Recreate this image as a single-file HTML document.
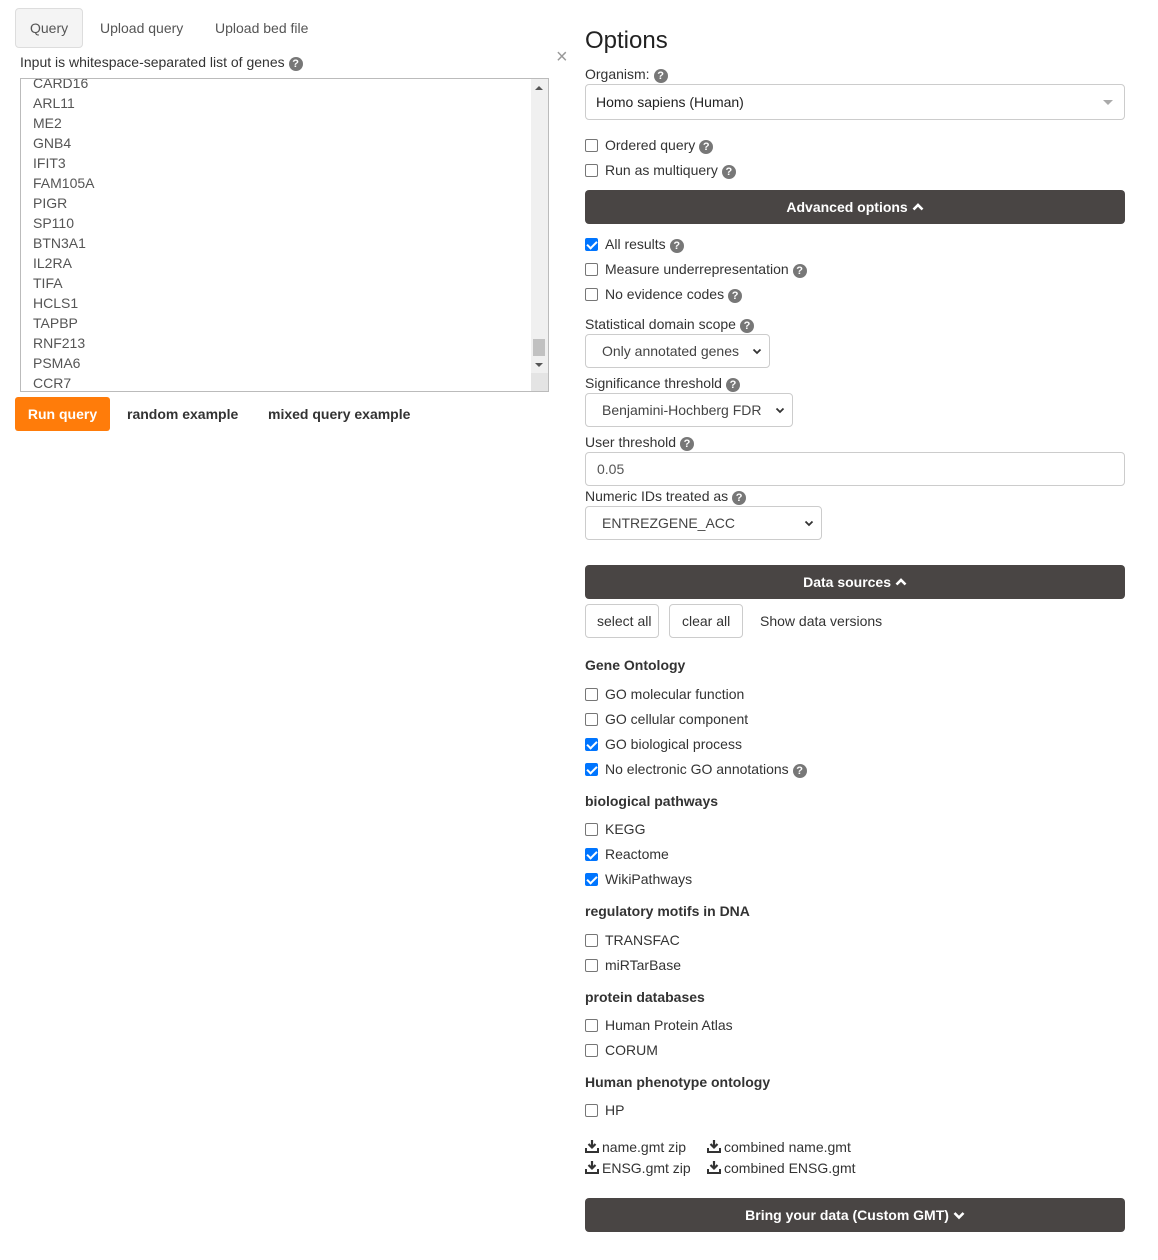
<!DOCTYPE html>
<html><head><meta charset="utf-8"><style>
*{box-sizing:border-box;margin:0;padding:0}
body{width:1158px;height:1260px;background:#fff;position:relative;font-family:"Liberation Sans",Arial,sans-serif;font-size:14px;color:#333;overflow:hidden}
.a{position:absolute;line-height:20px;white-space:nowrap}
.b{font-weight:bold}
.h{display:inline-block;width:14px;height:14px;border-radius:50%;background:#777;color:#fff;font-size:11px;font-weight:bold;line-height:14px;text-align:center;vertical-align:0px;margin-left:4px}
.cb{position:absolute;width:13px;height:13px;border:1px solid #767676;border-radius:2px;background:#fff}
.cb.on{background:#0075ff;border-color:#0075ff}
.cb.on:after{content:"";position:absolute;left:3px;top:0px;width:4px;height:8px;border:solid #fff;border-width:0 2px 2px 0;transform:rotate(45deg)}
.box{position:absolute;border:1px solid #ccc;border-radius:4px;background:#fff}
.bar{position:absolute;left:585px;width:540px;height:34px;background:#494544;border-radius:4px;color:#fff;font-weight:bold;text-align:center;line-height:34px}
.sel{position:absolute;border:1px solid #ccc;border-radius:4px;background:#fff;padding-left:16px;line-height:32px;color:#444}
.sel svg{position:absolute;right:7px;top:13px}
.gene{position:absolute;left:12px;line-height:20px;color:#555}
</style></head><body>

<div style="position:absolute;left:15px;top:8px;width:68px;height:40px;background:#f4f4f4;border:1px solid #ddd;border-radius:4px"></div>
<div class="a" style="left:30px;top:18px;color:#555">Query</div>
<div class="a" style="left:100px;top:18px;color:#555">Upload query</div>
<div class="a" style="left:215px;top:18px;color:#555">Upload bed file</div>
<div class="a" style="left:20px;top:52px">Input is whitespace-separated list of genes<span class="h">?</span></div>
<div class="a" style="left:556px;top:47px;color:#999;font-size:20px">×</div>

<div style="position:absolute;left:20px;top:78px;width:529px;height:314px;border:1px solid #bbb;overflow:hidden;background:#fff">
<div class="gene" style="top:-6px">CARD16</div>
<div class="gene" style="top:14px">ARL11</div>
<div class="gene" style="top:34px">ME2</div>
<div class="gene" style="top:54px">GNB4</div>
<div class="gene" style="top:74px">IFIT3</div>
<div class="gene" style="top:94px">FAM105A</div>
<div class="gene" style="top:114px">PIGR</div>
<div class="gene" style="top:134px">SP110</div>
<div class="gene" style="top:154px">BTN3A1</div>
<div class="gene" style="top:174px">IL2RA</div>
<div class="gene" style="top:194px">TIFA</div>
<div class="gene" style="top:214px">HCLS1</div>
<div class="gene" style="top:234px">TAPBP</div>
<div class="gene" style="top:254px">RNF213</div>
<div class="gene" style="top:274px">PSMA6</div>
<div class="gene" style="top:294px">CCR7</div>
<div style="position:absolute;left:510px;top:0;width:18px;height:312px;background:#f0f0f0"></div>
<div style="position:absolute;left:514px;top:7px;border:4px solid transparent;border-bottom:4px solid #555;border-top:0;width:0"></div>
<div style="position:absolute;left:512px;top:260px;width:12px;height:17px;background:#c1c1c1"></div>
<div style="position:absolute;left:514px;top:284px;border:4px solid transparent;border-top:4px solid #555;border-bottom:0;width:0"></div>
<div style="position:absolute;left:510px;top:294px;width:18px;height:18px;background:#e4e4e4"></div>
</div>

<div style="position:absolute;left:15px;top:397px;width:95px;height:34px;background:#ff7c0a;border-radius:3px;color:#fff;font-weight:bold;text-align:center;line-height:34px">Run query</div>
<div class="a b" style="left:127px;top:404px">random example</div>
<div class="a b" style="left:268px;top:404px">mixed query example</div>

<div class="a" style="left:585px;top:26px;font-size:24px;line-height:30px;color:#222">Options</div>
<div class="a" style="left:585px;top:64px">Organism:<span class="h">?</span></div>
<div class="box" style="left:585px;top:84px;width:540px;height:36px"></div>
<div class="a" style="left:596px;top:92px;color:#222">Homo sapiens (Human)</div>
<div style="position:absolute;left:1103px;top:100px;border:5px solid transparent;border-top:5px solid #aaa;border-bottom:0"></div>

<div class="cb" style="left:585px;top:139px"></div><div class="a" style="left:605px;top:135px">Ordered query<span class="h">?</span></div>
<div class="cb" style="left:585px;top:164px"></div><div class="a" style="left:605px;top:160px">Run as multiquery<span class="h">?</span></div>

<div class="bar" style="top:190px">Advanced options <svg width="12" height="10" viewBox="0 0 12 10" style="vertical-align:0"><path d="M1.5 7.5 L6 3 L10.5 7.5" stroke="#fff" stroke-width="2.6" fill="none"/></svg></div>

<div class="cb on" style="left:585px;top:238px"></div><div class="a" style="left:605px;top:234px">All results<span class="h">?</span></div>
<div class="cb" style="left:585px;top:263px"></div><div class="a" style="left:605px;top:259px">Measure underrepresentation<span class="h">?</span></div>
<div class="cb" style="left:585px;top:288px"></div><div class="a" style="left:605px;top:284px">No evidence codes<span class="h">?</span></div>

<div class="a" style="left:585px;top:314px">Statistical domain scope<span class="h">?</span></div>
<div class="sel" style="left:585px;top:334px;width:185px;height:34px">Only annotated genes<svg width="10" height="7"><path d="M1.5 1.5 L5 5 L8.5 1.5" stroke="#333" stroke-width="1.8" fill="none"/></svg></div>
<div class="a" style="left:585px;top:373px">Significance threshold<span class="h">?</span></div>
<div class="sel" style="left:585px;top:393px;width:208px;height:34px">Benjamini-Hochberg FDR<svg width="10" height="7"><path d="M1.5 1.5 L5 5 L8.5 1.5" stroke="#333" stroke-width="1.8" fill="none"/></svg></div>
<div class="a" style="left:585px;top:432px">User threshold<span class="h">?</span></div>
<div class="box" style="left:585px;top:452px;width:540px;height:34px"></div>
<div class="a" style="left:597px;top:459px;color:#555">0.05</div>
<div class="a" style="left:585px;top:486px">Numeric IDs treated as<span class="h">?</span></div>
<div class="sel" style="left:585px;top:506px;width:237px;height:34px">ENTREZGENE_ACC<svg width="10" height="7"><path d="M1.5 1.5 L5 5 L8.5 1.5" stroke="#333" stroke-width="1.8" fill="none"/></svg></div>

<div class="bar" style="top:565px">Data sources <svg width="12" height="10" viewBox="0 0 12 10"><path d="M1.5 7.5 L6 3 L10.5 7.5" stroke="#fff" stroke-width="2.6" fill="none"/></svg></div>
<div class="box" style="left:585px;top:604px;width:74px;height:34px"></div><div class="a" style="left:597px;top:611px">select all</div>
<div class="box" style="left:669px;top:604px;width:74px;height:34px"></div><div class="a" style="left:682px;top:611px">clear all</div>
<div class="a" style="left:760px;top:611px">Show data versions</div>

<div class="a b" style="left:585px;top:655px">Gene Ontology</div>
<div class="cb" style="left:585px;top:688px"></div><div class="a" style="left:605px;top:684px">GO molecular function</div>
<div class="cb" style="left:585px;top:713px"></div><div class="a" style="left:605px;top:709px">GO cellular component</div>
<div class="cb on" style="left:585px;top:738px"></div><div class="a" style="left:605px;top:734px">GO biological process</div>
<div class="cb on" style="left:585px;top:763px"></div><div class="a" style="left:605px;top:759px">No electronic GO annotations<span class="h">?</span></div>

<div class="a b" style="left:585px;top:791px">biological pathways</div>
<div class="cb" style="left:585px;top:823px"></div><div class="a" style="left:605px;top:819px">KEGG</div>
<div class="cb on" style="left:585px;top:848px"></div><div class="a" style="left:605px;top:844px">Reactome</div>
<div class="cb on" style="left:585px;top:873px"></div><div class="a" style="left:605px;top:869px">WikiPathways</div>

<div class="a b" style="left:585px;top:901px">regulatory motifs in DNA</div>
<div class="cb" style="left:585px;top:934px"></div><div class="a" style="left:605px;top:930px">TRANSFAC</div>
<div class="cb" style="left:585px;top:959px"></div><div class="a" style="left:605px;top:955px">miRTarBase</div>

<div class="a b" style="left:585px;top:987px">protein databases</div>
<div class="cb" style="left:585px;top:1019px"></div><div class="a" style="left:605px;top:1015px">Human Protein Atlas</div>
<div class="cb" style="left:585px;top:1044px"></div><div class="a" style="left:605px;top:1040px">CORUM</div>

<div class="a b" style="left:585px;top:1072px">Human phenotype ontology</div>
<div class="cb" style="left:585px;top:1104px"></div><div class="a" style="left:605px;top:1100px">HP</div>

<svg style="position:absolute;left:585px;top:1139px" width="14" height="14" viewBox="0 0 14 14"><path d="M7 1 V8 M3.5 5 L7 8.5 L10.5 5" stroke="#333" stroke-width="2.2" fill="none"/><path d="M1 9 V13 H13 V9" stroke="#333" stroke-width="2" fill="none"/></svg>
<div class="a" style="left:602px;top:1137px">name.gmt zip</div>
<svg style="position:absolute;left:707px;top:1139px" width="14" height="14" viewBox="0 0 14 14"><path d="M7 1 V8 M3.5 5 L7 8.5 L10.5 5" stroke="#333" stroke-width="2.2" fill="none"/><path d="M1 9 V13 H13 V9" stroke="#333" stroke-width="2" fill="none"/></svg>
<div class="a" style="left:724px;top:1137px">combined name.gmt</div>
<svg style="position:absolute;left:585px;top:1160px" width="14" height="14" viewBox="0 0 14 14"><path d="M7 1 V8 M3.5 5 L7 8.5 L10.5 5" stroke="#333" stroke-width="2.2" fill="none"/><path d="M1 9 V13 H13 V9" stroke="#333" stroke-width="2" fill="none"/></svg>
<div class="a" style="left:602px;top:1158px">ENSG.gmt zip</div>
<svg style="position:absolute;left:707px;top:1160px" width="14" height="14" viewBox="0 0 14 14"><path d="M7 1 V8 M3.5 5 L7 8.5 L10.5 5" stroke="#333" stroke-width="2.2" fill="none"/><path d="M1 9 V13 H13 V9" stroke="#333" stroke-width="2" fill="none"/></svg>
<div class="a" style="left:724px;top:1158px">combined ENSG.gmt</div>

<div class="bar" style="top:1198px">Bring your data (Custom GMT) <svg width="12" height="10" viewBox="0 0 12 10"><path d="M1.5 3 L6 7.5 L10.5 3" stroke="#fff" stroke-width="2.6" fill="none"/></svg></div>
</body></html>
